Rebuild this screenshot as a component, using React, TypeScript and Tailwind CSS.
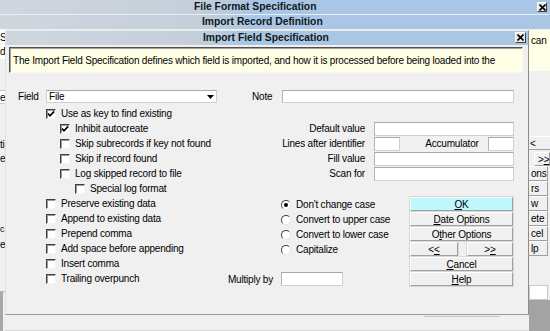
import type { ReactNode } from 'react'

const FONT = "font-['Liberation_Sans',Arial,sans-serif]"

const CHECKS = [
  { label: 'Use as key to find existing', indent: 'pl-0', checked: true },
  { label: 'Inhibit autocreate', indent: 'pl-[14px]', checked: true },
  { label: 'Skip subrecords if key not found', indent: 'pl-[14px]' },
  { label: 'Skip if record found', indent: 'pl-[14px]' },
  { label: 'Log skipped record to file', indent: 'pl-[14px]' },
  { label: 'Special log format', indent: 'pl-[29px]' },
  { label: 'Preserve existing data', indent: 'pl-0' },
  { label: 'Append to existing data', indent: 'pl-0' },
  { label: 'Prepend comma', indent: 'pl-0' },
  { label: 'Add space before appending', indent: 'pl-0' },
  { label: 'Insert comma', indent: 'pl-0' },
  { label: 'Trailing overpunch', indent: 'pl-0' },
]

const RADIOS = ["Don't change case", 'Convert to upper case', 'Convert to lower case', 'Capitalize']

function CloseBox({ className }: { className?: string }) {
  return (
    <div
      className={`flex items-center justify-center bg-[#e8e8e8] border border-t-white border-l-white border-r-[#404040] border-b-[#404040] ${className ?? ''}`}
    >
      <svg width="7" height="7" viewBox="0 0 7 7">
        <path d="M0.5 0.5 L6.5 6.5 M6.5 0.5 L0.5 6.5" stroke="#000" strokeWidth="1.6" />
      </svg>
    </div>
  )
}

function TitleBar({ title, textClass, children }: { title: string; textClass: string; children?: ReactNode }) {
  return (
    <div className="relative flex items-center h-[14px] shrink-0 bg-[linear-gradient(90deg,#cfd6de_0%,#c4cfdb_36%,#a9c6e4_47%,#a9c6e4_100%)]">
      <span className={`font-bold text-[10.3px] tracking-normal text-[#101820] whitespace-nowrap ${textClass}`}>{title}</span>
      {children}
    </div>
  )
}

function Check({ checked }: { checked?: boolean }) {
  return (
    <span className="flex items-center justify-center w-[10px] h-[10px] shrink-0 bg-white border border-t-[#404040] border-l-[#404040] border-r-[#f4f4f4] border-b-[#f4f4f4] shadow-[inset_1px_1px_0_#9a9a9a]">
      {checked && (
        <svg width="8" height="8" viewBox="0 0 8 8">
          <path d="M1 3.6 L3 5.8 L7.2 1.4" fill="none" stroke="#000" strokeWidth="1.7" />
        </svg>
      )}
    </span>
  )
}

function Radio({ on }: { on?: boolean }) {
  return (
    <span className="flex items-center justify-center w-[10px] h-[10px] shrink-0 rounded-full bg-white border border-t-[#404040] border-l-[#404040] border-r-[#e4e4e4] border-b-[#e4e4e4]">
      {on && <span className="w-[4px] h-[4px] rounded-full bg-black" />}
    </span>
  )
}

function Input({ className }: { className?: string }) {
  return <div className={`h-full bg-white border border-[#cfcfcf] border-t-[#a8a8a8] border-l-[#b4b4b4] ${className ?? ''}`} />
}

function Btn({ children, className }: { children: ReactNode; className?: string }) {
  return (
    <div
      className={`flex items-center justify-center h-[14px] border border-t-white border-l-white border-r-[#a0a0a0] border-b-[#a0a0a0] shadow-[0_0_0_1px_#d8d8d8] ${className ?? 'bg-[#f0f0f0]'}`}
    >
      {children}
    </div>
  )
}

function FieldDialog() {
  return (
    <div className="absolute left-[5px] top-[30px] w-[524px] h-[285px] flex flex-col bg-[#f0f0f0] border border-t-[#e8e8e8] border-l-[#e0e0e0] border-r-[#8c8c8c] border-b-[#9a9a9a]">
      <TitleBar title="Import Field Specification" textClass="pl-[197px]">
        <CloseBox className="absolute right-[2px] top-[1px] w-[11px] h-[11px]" />
      </TitleBar>

      {/* description */}
      <div className="mt-[2px] ml-[3px] mr-[5px] h-[26px] flex items-center pl-[3px] bg-[#ffffe6] border border-t-[#505050] border-l-[#505050] border-r-[#f8f8f8] border-b-[#f8f8f8] shadow-[inset_1px_1px_0_#a0a0a0] whitespace-nowrap overflow-hidden">
        The Import Field Specification defines which field is imported, and how it is processed before being loaded into the
      </div>

      {/* field / note row */}
      <div className="mt-[17px] h-[13px] flex items-center">
        <span className="ml-[12px] w-[28px]">Field</span>
        <div className="relative w-[171px] h-full flex items-center bg-white border border-[#cfcfcf] border-t-[#a8a8a8] pl-[2px]">
          File
          <div className="absolute right-[1px] top-0 bottom-0 w-[10px] flex items-center justify-center">
            <svg width="7" height="4" viewBox="0 0 7 4">
              <path d="M0 0 H7 L3.5 4 Z" fill="#000" />
            </svg>
          </div>
        </div>
        <span className="ml-[35px] w-[30px]">Note</span>
        <Input className="w-[232px]" />
      </div>

      <div className="mt-[3px] flex">
        {/* checkbox column */}
        <div className="ml-[40px] w-[180px] flex flex-col">
          {CHECKS.map((c) => (
            <div key={c.label} className={`h-[15px] flex items-center gap-[5px] whitespace-nowrap ${c.indent}`}>
              <Check checked={c.checked} />
              <span>{c.label}</span>
            </div>
          ))}
        </div>

        {/* right column */}
        <div className="w-[288px] flex flex-col pt-[16px]">
          <div className="flex flex-col gap-px">
            <div className="h-[14px] flex">
              <span className="w-[148px] pr-[9px] text-right leading-[14px]">Default value</span>
              <Input className="w-[140px]" />
            </div>
            <div className="h-[14px] flex">
              <span className="w-[148px] pr-[9px] text-right leading-[14px] whitespace-nowrap">Lines after identifier</span>
              <div className="w-[140px] flex">
                <Input className="w-[26px]" />
                <span className="flex-1 pl-[16px] text-center leading-[14px]">Accumulator</span>
                <Input className="w-[26px]" />
              </div>
            </div>
            <div className="h-[14px] flex">
              <span className="w-[148px] pr-[9px] text-right leading-[14px]">Fill value</span>
              <Input className="w-[140px]" />
            </div>
            <div className="h-[14px] flex">
              <span className="w-[148px] pr-[9px] text-right leading-[14px]">Scan for</span>
              <Input className="w-[140px]" />
            </div>
          </div>

          <div className="mt-[16px] flex">
            <div className="w-[184px] flex flex-col">
              {RADIOS.map((r, i) => (
                <div key={r} className="h-[15px] flex items-center gap-[5px] pl-[55px] whitespace-nowrap">
                  <Radio on={i === 0} />
                  <span>{r}</span>
                </div>
              ))}
              <div className="mt-auto h-[14px] flex items-center">
                <span className="w-[47px] text-right whitespace-nowrap">Multiply by</span>
                <Input className="ml-[8px] w-[62px]" />
              </div>
            </div>

            <div className="w-[103px] flex flex-col gap-px">
              <Btn className="bg-[#bff8fc]">
                <span><u>O</u>K</span>
              </Btn>
              <Btn>
                <span><u>D</u>ate Options</span>
              </Btn>
              <Btn>
                <span>O<u>t</u>her Options</span>
              </Btn>
              <div className="flex justify-between">
                <Btn className="w-[48px] bg-[#f0f0f0]">
                  <span>&lt;<u>&lt;</u></span>
                </Btn>
                <Btn className="w-[46px] bg-[#f0f0f0]">
                  <span>&gt;<u>&gt;</u></span>
                </Btn>
              </div>
              <Btn>
                <span><u>C</u>ancel</span>
              </Btn>
              <Btn>
                <span><u>H</u>elp</span>
              </Btn>
            </div>
          </div>
        </div>
      </div>
    </div>
  )
}

function StripBtn({ children }: { children: ReactNode }) {
  return (
    <div className="h-[15px] mr-[2px] flex items-center pl-[2px] border-b border-r border-b-[#a0a0a0] border-r-[#a0a0a0] border-t border-t-white overflow-hidden whitespace-nowrap">
      {children}
    </div>
  )
}

export default function App() {
  return (
    <div className={`relative w-[550px] h-[331px] overflow-hidden bg-[#f0f0f0] text-[10px] tracking-[-0.2px] text-black ${FONT}`}>
      <div className="flex flex-col h-full">
        <TitleBar title="File Format Specification" textClass="pl-[194px]">
          <CloseBox className="absolute left-[537px] top-[2px] w-[10px] h-[10px]" />
        </TitleBar>
        <div className="h-px bg-[#e6edf5]" />
        <TitleBar title="Import Record Definition" textClass="pl-[202px]" />

        {/* body of the record definition window, mostly hidden */}
        <div className="flex flex-1 min-h-0">
          <div className="w-[5px] flex flex-col overflow-hidden bg-white">
            <div className="h-[16px] leading-[16px] pt-[1px]">S</div>
            <div className="h-[14px] leading-[14px]">d</div>
            <div className="h-[31px] bg-[#f0f0f0]" />
            <div className="h-[14px] leading-[14px] border-y border-[#c8c8c8]">e</div>
            <div className="h-[34px] bg-[#f0f0f0]" />
            <div className="h-[14px] leading-[14px] bg-[#f0f0f0] whitespace-nowrap">ti</div>
            <div className="h-[14px] leading-[14px] bg-[#f0f0f0]">e</div>
            <div className="h-[56px] bg-[#f0f0f0]" />
            <div className="h-[15px] leading-[15px] bg-[#f0f0f0] text-[9px]">c</div>
            <div className="h-[15px] leading-[15px] bg-[#f0f0f0]">e</div>
            <div className="h-[40px] bg-[#f0f0f0] border-b border-[#b8b8b8]" />
            <div className="flex-1 bg-[#f0f0f0] border-l-[3px] border-[#a8a8a8]" />
          </div>

          <div className="flex-1 flex flex-col justify-end">
            <div className="ml-[419px] w-[76px] h-px bg-[#c4c4c4] mb-[13px]" />
            <div className="h-px bg-[#d8d8d8]" />
          </div>

          <div className="w-[21px] flex flex-col overflow-hidden">
            <div className="h-[1px]" />
            <div className="h-[41px] bg-[#ffffe8] pl-[2px] pt-[5px] leading-[12px]">can</div>
            <div className="h-[65px]" />
            <div className="h-[14px] leading-[13px] pl-[1px] border-y border-t-white border-b-[#a0a0a0]">&lt;</div>
            <div className="h-[2px]" />
            <div className="h-[14px] ml-[5px] flex items-center pl-[3px] border border-t-white border-l-white border-r-[#a0a0a0] border-b-[#a0a0a0]">
              <span>&gt;<u>&gt;</u></span>
            </div>
            <StripBtn>ons</StripBtn>
            <StripBtn>rs</StripBtn>
            <StripBtn>w</StripBtn>
            <StripBtn>ete</StripBtn>
            <StripBtn>cel</StripBtn>
            <StripBtn>lp</StripBtn>
            <div className="h-[29px]" />
            <div className="h-[15px] mr-[2px] bg-white border border-[#c8c8c8]" />
            <div className="flex-1 bg-[#a3a3a3]" />
          </div>
        </div>
      </div>

      <FieldDialog />
    </div>
  )
}
